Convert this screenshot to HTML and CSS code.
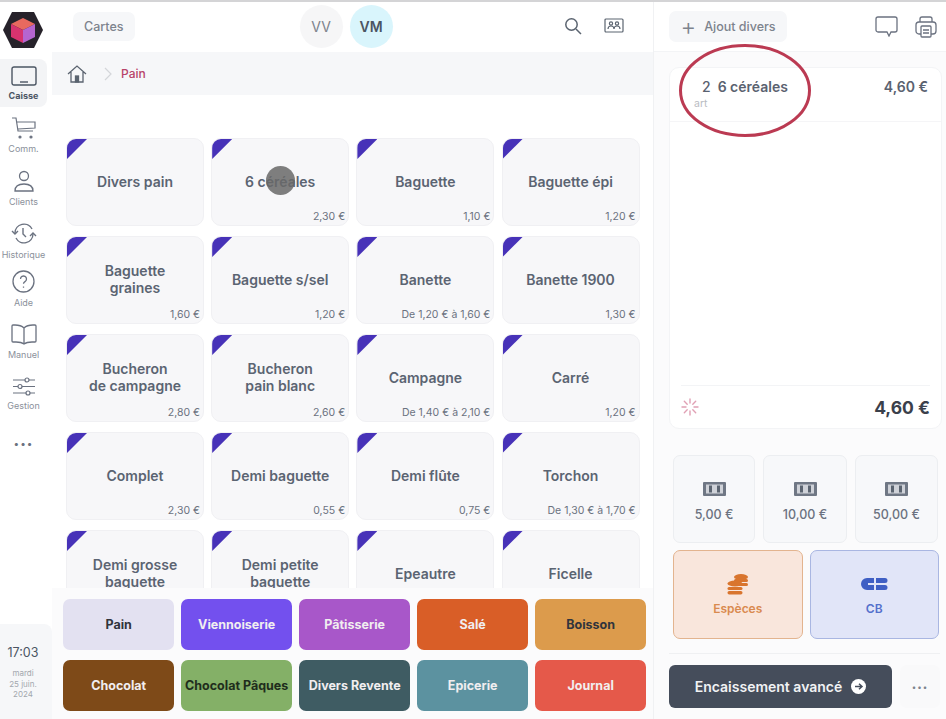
FILE: index.html
```html
<!DOCTYPE html>
<html>
<head>
    <title>Caisse</title>
    <link rel="stylesheet" href="styles.css">
</head>
<body>
<div class="app">
    <nav class="sidebar">
        <svg class="logo" width="42" height="38" viewBox="0 0 42 38">
            <polygon points="10,1 32,1 41,19 32,37 10,37 1,19" fill="#26222a"/>
            <polygon points="21,7 33,13 21,19 9,13" fill="#e8695f"/>
            <polygon points="9,13 21,19 21,32 9,26" fill="#d6336f"/>
            <polygon points="33,13 21,19 21,32 33,26" fill="#b565d0"/>
        </svg>
        <a class="nav-item active">
            <svg width="26" height="20" viewBox="0 0 26 20" fill="none" stroke="#4b5563" stroke-width="1.4"><rect x="1" y="1" width="24" height="18" rx="2"/><path d="M9 16h8"/></svg>
            <span>Caisse</span>
        </a>
        <a class="nav-item">
            <svg width="26" height="22" viewBox="0 0 26 22" fill="none" stroke="#6b7280" stroke-width="1.2"><path d="M1 1h4l2 13h15M6 5h18v6l-17 1"/><circle cx="9" cy="20" r="1" fill="#6b7280"/><circle cx="20" cy="20" r="1" fill="#6b7280"/></svg>
            <span>Comm.</span>
        </a>
        <a class="nav-item">
            <svg width="22" height="22" viewBox="0 0 22 22" fill="none" stroke="#6b7280" stroke-width="1.3"><circle cx="11" cy="6" r="4.5"/><path d="M2 21c0-5 4-7 9-7s9 2 9 7z"/></svg>
            <span>Clients</span>
        </a>
        <a class="nav-item nav-tight">
            <svg width="26" height="23" viewBox="0 0 26 23" fill="none" stroke="#6b7280" stroke-width="1.4"><path d="M4 11a9 9 0 0 1 17-4M22 12a9 9 0 0 1-17 4"/><path d="M1 9l3 3 3-3M25 14l-3-3-3 3"/><path d="M12 6v6l3 3"/></svg>
            <span>Historique</span>
        </a>
        <a class="nav-item">
            <svg width="23" height="23" viewBox="0 0 23 23" fill="none" stroke="#6b7280" stroke-width="1.3"><circle cx="11.5" cy="11.5" r="10.5"/><path d="M8.5 9a3 3 0 1 1 4.5 2.6c-1 .6-1.5 1.1-1.5 2.2M11.5 16.5v1.2"/></svg>
            <span>Aide</span>
        </a>
        <a class="nav-item">
            <svg width="26" height="21" viewBox="0 0 26 21" fill="none" stroke="#6b7280" stroke-width="1.3"><path d="M13 4c-2-2-5-3-9-3H2c-.6 0-1 .4-1 1v15c0 .6.4 1 1 1h3c3 0 6 .5 8 2 2-1.500 5-2 8-2h3c.6 0 1-.4 1-1V2c0-.6-.4-1-1-1h-2c-4 0-7 1-9 3zM13 4v15"/></svg>
            <span>Manuel</span>
        </a>
        <a class="nav-item">
            <svg width="22" height="19" viewBox="0 0 22 19" fill="none" stroke="#6b7280" stroke-width="1.2"><path d="M0 3h22M0 9.500h22M0 16h22"/><circle cx="14" cy="3" r="2" fill="#fff"/><circle cx="7" cy="9.500" r="2" fill="#fff"/><circle cx="15" cy="16" r="2" fill="#fff"/></svg>
            <span>Gestion</span>
        </a>
        <div class="nav-dots">•••</div>
        <div class="clock">
            <div class="clock-time">17:03</div>
            <div class="clock-date">mardi<br>25 juin.<br>2024</div>
        </div>
    </nav>

    <main class="main">
        <header class="topbar">
            <button class="soft-btn">Cartes</button>
            <div class="users">
                <div class="user">VV</div>
                <div class="user current">VM</div>
            </div>
            <div class="topbar-icons">
                <svg width="18" height="18" viewBox="0 0 18 18" fill="none" stroke="#5b6470" stroke-width="1.5"><circle cx="7.500" cy="7.500" r="5.700"/><path d="M12 12l5 5"/></svg>
                <svg width="20" height="16" viewBox="0 0 20 16" fill="none" stroke="#5b6470" stroke-width="1.2"><rect x="1" y="1" width="18" height="13" rx="1"/><circle cx="7" cy="5.500" r="1.600"/><circle cx="13" cy="5.500" r="1.600"/><path d="M4 11c0-2 1.500-3 3-3s3 1 3 3c0-2 1.500-3 3-3s3 1 3 3"/></svg>
            </div>
        </header>
        <div class="breadcrumb">
            <svg width="20" height="18" viewBox="0 0 20 18" fill="none" stroke="#5b6470" stroke-width="1.300"><path d="M1 9l9-8 9 8M4 7v10h12V7"/><rect x="8.500" y="11" width="3" height="6" fill="#5b6470"/></svg>
            <svg class="crumb-sep" width="8" height="14" viewBox="0 0 8 14" fill="none" stroke="#d4d6da" stroke-width="1.200"><path d="M1 1l6 6-6 6"/></svg>
            <span class="crumb-current">Pain</span>
        </div>
        <div class="products">
            <div class="tile"><i class="corner"></i><div class="tile-name">Divers pain</div></div>
            <div class="tile"><i class="corner"></i><div class="tile-name">6 céréales</div><div class="tile-price">2,30 €</div><i class="tap"></i></div>
            <div class="tile"><i class="corner"></i><div class="tile-name">Baguette</div><div class="tile-price">1,10 €</div></div>
            <div class="tile"><i class="corner"></i><div class="tile-name">Baguette épi</div><div class="tile-price">1,20 €</div></div>

            <div class="tile"><i class="corner"></i><div class="tile-name">Baguette<br>graines</div><div class="tile-price">1,60 €</div></div>
            <div class="tile"><i class="corner"></i><div class="tile-name">Baguette s/sel</div><div class="tile-price">1,20 €</div></div>
            <div class="tile"><i class="corner"></i><div class="tile-name">Banette</div><div class="tile-price">De 1,20 € à 1,60 €</div></div>
            <div class="tile"><i class="corner"></i><div class="tile-name">Banette 1900</div><div class="tile-price">1,30 €</div></div>

            <div class="tile"><i class="corner"></i><div class="tile-name">Bucheron<br>de campagne</div><div class="tile-price">2,80 €</div></div>
            <div class="tile"><i class="corner"></i><div class="tile-name">Bucheron<br>pain blanc</div><div class="tile-price">2,60 €</div></div>
            <div class="tile"><i class="corner"></i><div class="tile-name">Campagne</div><div class="tile-price">De 1,40 € à 2,10 €</div></div>
            <div class="tile"><i class="corner"></i><div class="tile-name">Carré</div><div class="tile-price">1,20 €</div></div>

            <div class="tile"><i class="corner"></i><div class="tile-name">Complet</div><div class="tile-price">2,30 €</div></div>
            <div class="tile"><i class="corner"></i><div class="tile-name">Demi baguette</div><div class="tile-price">0,55 €</div></div>
            <div class="tile"><i class="corner"></i><div class="tile-name">Demi flûte</div><div class="tile-price">0,75 €</div></div>
            <div class="tile"><i class="corner"></i><div class="tile-name">Torchon</div><div class="tile-price">De 1,30 € à 1,70 €</div></div>

            <div class="tile"><i class="corner"></i><div class="tile-name">Demi grosse<br>baguette</div></div>
            <div class="tile"><i class="corner"></i><div class="tile-name">Demi petite<br>baguette</div></div>
            <div class="tile"><i class="corner"></i><div class="tile-name">Epeautre</div></div>
            <div class="tile"><i class="corner"></i><div class="tile-name">Ficelle</div></div>
        </div>
        <div class="categories">
            <button class="cat cat-pain">Pain</button>
            <button class="cat cat-viennoiserie">Viennoiserie</button>
            <button class="cat cat-patisserie">Pâtisserie</button>
            <button class="cat cat-sale">Salé</button>
            <button class="cat cat-boisson">Boisson</button>
            <button class="cat cat-chocolat">Chocolat</button>
            <button class="cat cat-paques">Chocolat Pâques</button>
            <button class="cat cat-revente">Divers Revente</button>
            <button class="cat cat-epicerie">Epicerie</button>
            <button class="cat cat-journal">Journal</button>
        </div>
    </main>

    <aside class="panel">
        <header class="panel-top">
            <button class="soft-btn add-btn"><span class="plus">+</span>Ajout divers</button>
            <div class="panel-icons">
                <svg width="23" height="21" viewBox="0 0 23 21" fill="none" stroke="#6b7280" stroke-width="1.300"><path d="M3 1h17a2 2 0 0 1 2 2v11a2 2 0 0 1-2 2h-4l-2 4-2-4H3a2 2 0 0 1-2-2V3a2 2 0 0 1 2-2z"/></svg>
                <svg width="22" height="22" viewBox="0 0 22 22" fill="none" stroke="#6b7280" stroke-width="1.300"><path d="M5 6V3a2 2 0 0 1 2-2h8a2 2 0 0 1 2 2v3"/><rect x="1" y="6" width="20" height="12" rx="3"/><rect x="6" y="10" width="10" height="11" rx="1" fill="#fff"/><path d="M8 14h6M8 17h6"/></svg>
            </div>
        </header>
        <section class="ticket">
            <div class="ticket-line">
                <div>
                    <div class="line-title"><span class="qty">2</span>6 céréales</div>
                    <div class="line-sub">art</div>
                </div>
                <div class="line-price">4,60 €</div>
            </div>
            <div class="ticket-body"></div>
            <div class="ticket-total">
                <svg width="18" height="18" viewBox="0 0 18 18" fill="none" stroke="#e0a0b4" stroke-width="1.400" stroke-linecap="round"><path d="M9 1v4M9 13v4M1 9h4M13 9h4M3.300 3.300l2.900 2.900M11.800 11.800l2.900 2.900M3.300 14.700l2.900-2.900M11.800 6.200l2.900-2.900"/></svg>
                <span class="total-amount">4,60 €</span>
            </div>
        </section>
        <div class="cash-row">
            <button class="cash"><svg class="note" width="23" height="14" viewBox="0 0 23 14"><rect width="23" height="14" rx="1" fill="#6f7784"/><rect x="3" y="2.500" width="17" height="9" fill="#cfd2d8"/><rect x="6" y="3.500" width="3" height="7" fill="#5b6470"/><rect x="14" y="3.500" width="3" height="7" fill="#5b6470"/></svg>5,00 €</button>
            <button class="cash"><svg class="note" width="23" height="14" viewBox="0 0 23 14"><rect width="23" height="14" rx="1" fill="#6f7784"/><rect x="3" y="2.500" width="17" height="9" fill="#cfd2d8"/><rect x="6" y="3.500" width="3" height="7" fill="#5b6470"/><rect x="14" y="3.500" width="3" height="7" fill="#5b6470"/></svg>10,00 €</button>
            <button class="cash"><svg class="note" width="23" height="14" viewBox="0 0 23 14"><rect width="23" height="14" rx="1" fill="#6f7784"/><rect x="3" y="2.500" width="17" height="9" fill="#cfd2d8"/><rect x="6" y="3.500" width="3" height="7" fill="#5b6470"/><rect x="14" y="3.500" width="3" height="7" fill="#5b6470"/></svg>50,00 €</button>
        </div>
        <div class="pay-row">
            <button class="pay pay-cash">
                <svg width="22" height="22" viewBox="0 0 22 22" fill="#d9752e"><ellipse cx="14" cy="4" rx="7" ry="3"/><rect x="7" y="6" width="14" height="3" rx="1.500"/><rect x="10" y="10" width="11" height="3" rx="1.500"/><ellipse cx="8" cy="10.500" rx="7.500" ry="3"/><rect x="0.500" y="14" width="15" height="3" rx="1.500"/><rect x="0.500" y="18" width="15" height="3.500" rx="1.700"/></svg>
                Espèces
            </button>
            <button class="pay pay-card">
                <svg width="27" height="22" viewBox="0 -5 27 22" fill="#3f5fc4"><path d="M13 0H6a6 6 0 0 0 0 12h7V7H7V5h6z"/><path d="M15 0h9a2.500 2.500 0 0 1 0 5h-9zM15 7h9a2.500 2.500 0 0 1 0 5h-9z"/></svg>
                CB
            </button>
        </div>
        <div class="checkout">
            <button class="checkout-btn">Encaissement avancé
                <svg width="15" height="15" viewBox="0 0 15 15"><circle cx="7.500" cy="7.500" r="7.500" fill="#fff"/><path d="M4 7.500h7M8 4.700l3 2.800-3 2.800" fill="none" stroke="#454d5b" stroke-width="1.500"/></svg>
            </button>
            <button class="more-btn">•••</button>
        </div>
    </aside>

    <svg class="circle-mark" width="134" height="95" viewBox="0 0 134 95" fill="none"><ellipse cx="67" cy="47.500" rx="64.500" ry="45" stroke="#bb3a52" stroke-width="3"/></svg>
</div>
</body>
</html>
```

FILE: styles.css
```css
* {
    box-sizing: border-box;
}
html, body {
    margin: 0;
    height: 100%;
    overflow: hidden;
}
body {
    font-family: Inter, "Liberation Sans", sans-serif;
    background: #fff;
    color: #4b5563;
}
button {
    font-family: inherit;
    border: none;
    cursor: pointer;
}
.app {
    position: relative;
    display: flex;
    width: 946px;
    height: 719px;
    border-top: 2px solid #d4d4d6;
}

/* sidebar */
.sidebar {
    width: 52px;
    flex: none;
    display: flex;
    flex-direction: column;
    align-items: flex-start;
    background: #fff;
}
.logo {
    margin: 9px 0 10px 2px;
}
.nav-item {
    width: 47px;
    height: 48px;
    margin-bottom: 4.5px;
    display: flex;
    flex-direction: column;
    align-items: center;
    justify-content: center;
    gap: 4px;
    border-radius: 0 8px 8px 0;
    font-size: 9px;
    line-height: 11px;
    color: #8b919b;
    white-space: nowrap;
}
.nav-item.active {
    background: #f3f4f6;
    color: #4b5563;
    font-weight: 700;
}
.nav-item.nav-tight {
    margin-bottom: 0.5px;
}
.nav-dots {
    width: 47px;
    margin-top: 14px;
    text-align: center;
    font-size: 10px;
    letter-spacing: 1px;
    color: #6b7280;
}
.clock {
    margin-top: auto;
    width: 52px;
    height: 95px;
    padding: 21px 6px 0 0;
    background: #f6f7f9;
    border-radius: 0 8px 0 0;
    text-align: center;
}
.clock-time {
    font-size: 12.500px;
    color: #4b5563;
}
.clock-date {
    margin-top: 8px;
    font-size: 8px;
    line-height: 10.500px;
    color: #a3a7ae;
}

/* main column */
.main {
    width: 602px;
    flex: none;
    display: flex;
    flex-direction: column;
    border-right: 1px solid #f0f1f3;
}
.topbar {
    height: 50px;
    flex: none;
    display: flex;
    align-items: center;
    padding: 0 29px 2px 21px;
    position: relative;
}
.soft-btn {
    height: 29px;
    padding: 0 11px;
    background: #f6f7f9;
    border-radius: 7px;
    font-size: 12.500px;
    font-weight: 500;
    color: #7d838d;
}
.users {
    display: flex;
    gap: 7px;
    margin-left: 165px;
}
.user {
    width: 43px;
    height: 43px;
    border-radius: 50%;
    background: #f6f6f7;
    display: flex;
    align-items: center;
    justify-content: center;
    font-size: 14px;
    color: #7d838d;
}
.user.current {
    background: #d9f5fc;
    color: #4b5563;
    font-weight: 600;
}
.topbar-icons {
    margin-left: auto;
    display: flex;
    align-items: center;
    gap: 22px;
}
.breadcrumb {
    height: 43px;
    flex: none;
    display: flex;
    align-items: center;
    padding-left: 15px;
    background: #f6f7f9;
}
.crumb-sep {
    margin: 0 9px 0 17px;
}
.crumb-current {
    font-size: 12px;
    font-weight: 500;
    color: #b8446a;
}
.products {
    flex: 1;
    min-height: 0;
    overflow: hidden;
    display: grid;
    grid-template-columns: repeat(4, 138px);
    grid-auto-rows: 88px;
    column-gap: 7.200px;
    row-gap: 10px;
    padding: 43px 0 0 14px;
}
.tile {
    position: relative;
    display: grid;
    overflow: hidden;
    background: #f7f7f9;
    border: 1px solid #f0f0f3;
    border-radius: 10px;
}
.corner {
    position: absolute;
    top: 0;
    left: 0;
    width: 20px;
    height: 20px;
    background: #4732b8;
    clip-path: polygon(0 0, 100% 0, 0 100%);
}
.tile-name {
    grid-area: 1 / 1;
    place-self: center;
    margin-bottom: 2px;
    text-align: center;
    font-size: 14px;
    line-height: 17px;
    font-weight: 600;
    color: #5b6472;
}
.tile-price {
    grid-area: 1 / 1;
    place-self: end;
    padding: 0 3px 2px 0;
    font-size: 10.500px;
    line-height: 13px;
    color: #6b7280;
}
.tap {
    position: absolute;
    left: 54px;
    top: 27px;
    width: 29px;
    height: 29px;
    border-radius: 50%;
    background: rgba(105, 105, 105, 0.85);
}
.categories {
    height: 131px;
    flex: none;
    display: grid;
    grid-template-columns: repeat(5, 111.400px);
    grid-auto-rows: 51px;
    gap: 10px 6.600px;
    padding: 11px 0 0 11px;
    background: #fbfbfc;
}
.cat {
    border-radius: 7px;
    font-size: 12.500px;
    font-weight: 700;
    color: #f1eef0;
    padding: 0;
    white-space: nowrap;
}
.cat-pain { background: #e3e1f1; color: #30343c; }
.cat-viennoiserie { background: #7350ee; }
.cat-patisserie { background: #a857c9; }
.cat-sale { background: #d95e27; }
.cat-boisson { background: #dc9b4c; color: #30343c; }
.cat-chocolat { background: #7e4a18; }
.cat-paques { background: #84b067; color: #1f2d1c; }
.cat-revente { background: #3f5c63; }
.cat-epicerie { background: #5c92a0; }
.cat-journal { background: #e5594a; }

/* ticket panel */
.panel {
    flex: 1;
    min-width: 0;
    display: flex;
    flex-direction: column;
    background: #fbfbfc;
}
.panel-top {
    height: 50px;
    flex: none;
    display: flex;
    align-items: center;
    padding: 0 9px 0 15px;
    background: #fff;
    border-bottom: 1px solid #f3f4f6;
}
.add-btn {
    height: 31px;
    width: 118px;
    padding: 0;
    display: flex;
    align-items: center;
    justify-content: center;
    gap: 8px;
}
.plus {
    font-size: 24px;
    font-weight: 300;
    line-height: 1;
}
.panel-icons {
    margin-left: auto;
    display: flex;
    align-items: center;
    gap: 17px;
}
.ticket {
    height: 362px;
    flex: none;
    margin: 15px 4px 0 15px;
    padding: 0 11px;
    display: flex;
    flex-direction: column;
    background: #fff;
    border: 1px solid #f3f4f6;
    border-radius: 10px;
}
.ticket-line {
    height: 54px;
    flex: none;
    display: flex;
    justify-content: space-between;
    margin: 0 -11px;
    padding: 10px 13px 0 24px;
    border-bottom: 1px solid #f5f5f7;
}
.line-title {
    font-size: 14px;
    font-weight: 600;
    color: #5a6270;
}
.qty {
    font-weight: 500;
    margin: 0 7px 0 8px;
}
.line-sub {
    margin-top: 2px;
    font-size: 10.500px;
    color: #b9bcc2;
}
.line-price {
    font-size: 14px;
    font-weight: 600;
    color: #5a6270;
}
.ticket-body {
    flex: 1;
}
.ticket-total {
    height: 43px;
    flex: none;
    display: flex;
    align-items: center;
    justify-content: space-between;
    border-top: 1px solid #f3f4f6;
}
.total-amount {
    font-size: 17.500px;
    font-weight: 700;
    color: #3a404b;
}
.cash-row {
    display: grid;
    grid-template-columns: 82px 84px 83px;
    gap: 8px;
    margin: 26px 8px 0 19px;
}
.cash {
    height: 88px;
    padding: 5px 0 0;
    display: flex;
    flex-direction: column;
    align-items: center;
    justify-content: center;
    gap: 11px;
    background: #f7f8fa;
    border: 1px solid #eceef1;
    border-radius: 7px;
    font-size: 12.500px;
    font-weight: 500;
    color: #6b7280;
}
.pay-row {
    display: grid;
    grid-template-columns: 129.500px 129.500px;
    gap: 7px;
    margin: 7px 8px 0 19px;
}
.pay {
    height: 89px;
    padding: 0;
    display: flex;
    flex-direction: column;
    align-items: center;
    justify-content: center;
    gap: 6px;
    border-radius: 7px;
    font-size: 12px;
    font-weight: 600;
}
.pay-cash {
    background: #f9e6dc;
    border: 1.500px solid #e3b48f;
    color: #d98a4f;
}
.pay-card {
    background: #e1e5f8;
    border: 1.500px solid #a9b6e2;
    color: #5470cc;
}
.checkout {
    margin: 14px 6px 0 15px;
    padding-top: 11px;
    display: flex;
    gap: 8px;
    border-top: 1px solid #eff0f2;
}
.checkout-btn {
    width: 223px;
    height: 43px;
    display: flex;
    align-items: center;
    justify-content: center;
    gap: 9px;
    background: #454d5b;
    border-radius: 6px;
    font-size: 14px;
    font-weight: 600;
    color: #f1f2f4;
}
.more-btn {
    width: 40px;
    height: 43px;
    padding: 0;
    background: #f9f9fa;
    border-radius: 7px;
    font-size: 8px;
    letter-spacing: 1px;
    color: #7d838d;
}

/* annotation drawn over the screenshot */
.circle-mark {
    position: absolute;
    left: 678px;
    top: 41px;
}
```
